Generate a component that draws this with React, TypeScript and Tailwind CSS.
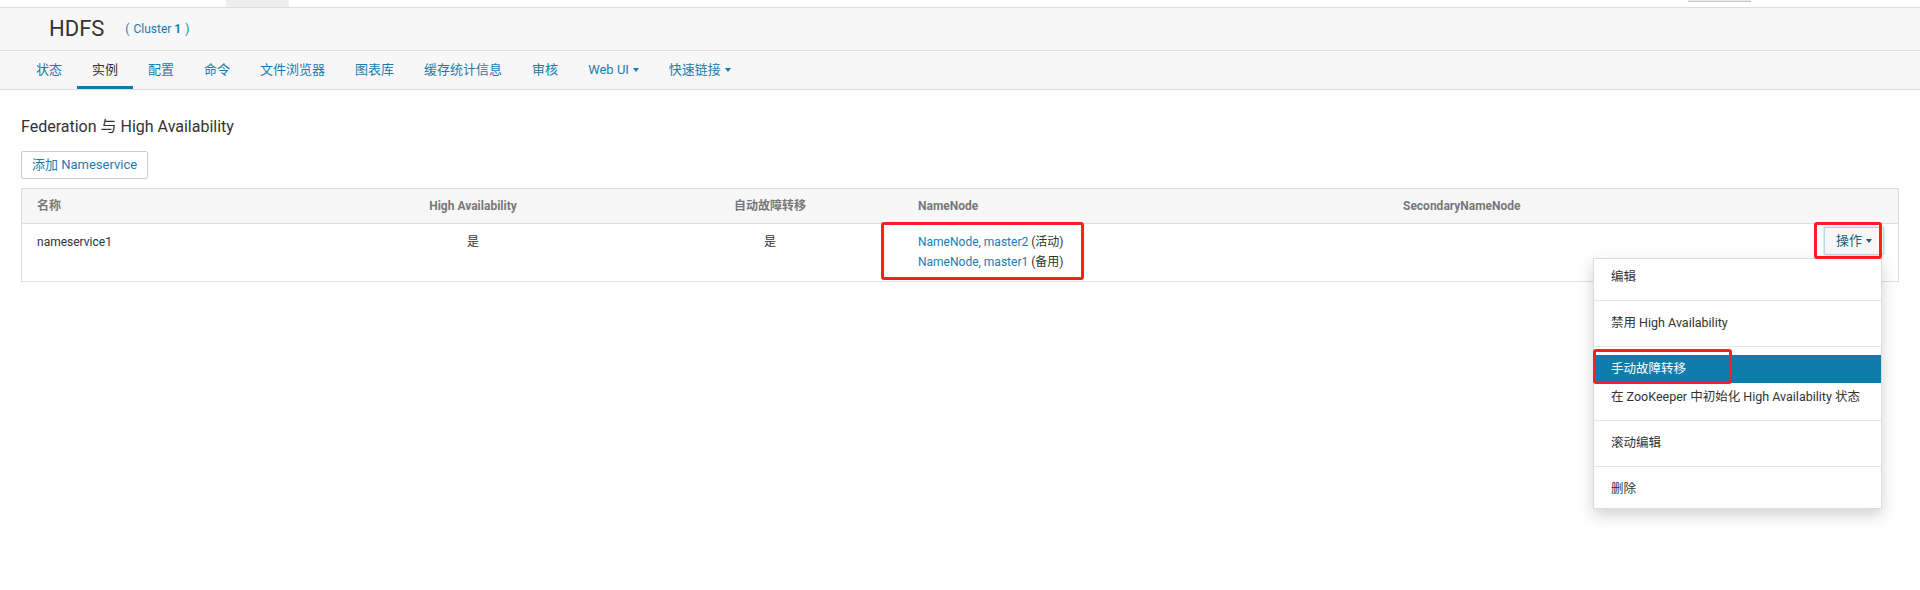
const NAV = [
  { label: "状态" },
  { label: "实例", active: true },
  { label: "配置" },
  { label: "命令" },
  { label: "文件浏览器" },
  { label: "图表库" },
  { label: "缓存统计信息" },
  { label: "审核" },
  { label: "Web UI", caret: true },
  { label: "快速链接", caret: true },
];

const MENU = [
  ["编辑"],
  ["禁用 High Availability"],
  ["手动故障转移", "在 ZooKeeper 中初始化 High Availability 状态"],
  ["滚动编辑"],
  ["删除"],
];

function Caret({ className = "" }: { className?: string }) {
  return (
    <span
      className={`ml-[4px] inline-block h-0 w-0 border-x-[3px] border-t-[4px] border-x-transparent align-middle ${className}`}
    />
  );
}

export default function App() {
  return (
    <div className="relative h-[590px] w-[1920px] overflow-hidden bg-white font-['Roboto','Noto_Sans_CJK_SC',sans-serif] text-[13px] text-[#333]">
      {/* browser remnants on top */}
      <div className="flex h-[8px] border-b border-[#dddddd]">
        <div className="ml-[226px] h-full w-[63px] bg-[#efeeee]" />
        <div className="ml-[1399px] h-[2px] w-[63px] border-b border-[#c8c8c8] bg-[#e9e9e9]" />
      </div>

      {/* service header */}
      <div className="flex h-[43px] items-center border-b border-[#dddddd] bg-[#f7f7f7] pl-[49px]">
        <span className="text-[22px] leading-none text-[#333]">HDFS</span>
        <span className="ml-[21px] text-[12px] text-[#1a7bb0]">
          (<span className="ml-[4px]">Cluster</span>{" "}
          <b className="font-bold">1</b>
          <span className="ml-[4px]">)</span>
        </span>
      </div>

      {/* tabs */}
      <div className="flex h-[39px] border-b border-[#dddddd] bg-[#f7f7f7] pl-[21px]">
        {NAV.map((n) => (
          <div
            key={n.label}
            className={`flex h-full items-center px-[15px] ${
              n.active
                ? "border-b-[3px] border-[#0e7dab] pt-[3px] text-[#333]"
                : "text-[#1a7bb0]"
            }`}
          >
            {n.label}
            {n.caret && <Caret className="border-t-[#1a7bb0]" />}
          </div>
        ))}
      </div>

      <div className="px-[21px]">
        <h2 className="mt-[25px] text-[16px] leading-[24px] font-normal text-[#333]">
          Federation 与 High Availability
        </h2>

        <button className="mt-[12px] h-[28px] rounded-[2px] border border-[#cccccc] bg-white px-[10px] text-[13px] text-[#1a7bb0]">
          添加 Nameservice
        </button>

        <div className="mt-[9px] border border-[#dddddd] text-[12px]">
          <div className="grid h-[35px] grid-cols-[290px_322px_272px_485px_1fr] items-center border-b border-[#dddddd] bg-[#f7f7f7] font-bold text-[#777]">
            <div className="pl-[15px]">名称</div>
            <div className="text-center">High Availability</div>
            <div className="text-center">自动故障转移</div>
            <div className="pl-[12px]">NameNode</div>
            <div className="pl-[12px]">SecondaryNameNode</div>
          </div>
          <div className="grid h-[57px] grid-cols-[290px_322px_272px_485px_1fr] leading-[20px]">
            <div className="pl-[15px] pt-[8px]">nameservice1</div>
            <div className="pt-[8px] text-center">是</div>
            <div className="pt-[8px] text-center">是</div>
            <div className="flex flex-col pl-[12px] pt-[8px]">
              <div>
                <span className="text-[#1a7bb0]">NameNode, master2</span> (活动)
              </div>
              <div>
                <span className="text-[#1a7bb0]">NameNode, master1</span> (备用)
              </div>
            </div>
            <div className="flex justify-end pr-[14px] pt-[3px]">
              <button className="flex h-[28px] items-center rounded-[2px] border border-[#b8d7e8] bg-[#f7f7f7] px-[11px] text-[13px] text-[#1d5f82] shadow-[0_0_0_1px_#dcebf3]">
                操作
                <Caret className="ml-[2px] border-t-[#1d5f82]" />
              </button>
            </div>
          </div>
        </div>
      </div>

      {/* open dropdown */}
      <div className="absolute left-[1593px] top-[258px] w-[289px] border border-[#dddddd] bg-white text-[12.5px] shadow-[0_6px_14px_rgba(0,0,0,0.18)]">
        {MENU.map((group, gi) => {
          const first = gi === 0;
          const last = gi === MENU.length - 1;
          return (
            <div
              key={gi}
              className={`${first ? "pt-[4px]" : "pt-[8px]"} ${
                last ? "pb-[5px]" : "border-b border-[#e5e5e5] pb-[9px]"
              }`}
            >
              {group.map((item) => (
                <div
                  key={item}
                  className={`flex h-[28px] items-center whitespace-nowrap px-[17px] ${
                    item === "手动故障转移" ? "bg-[#0e7dab] text-white" : "text-[#333]"
                  }`}
                >
                  {item}
                </div>
              ))}
            </div>
          );
        })}
      </div>

      {/* red annotation boxes */}
      <div className="absolute left-[881px] top-[222px] h-[58px] w-[203px] rounded-[3px] border-[3px] border-[#ff1d1d]" />
      <div className="absolute left-[1814px] top-[222px] h-[37px] w-[68px] rounded-[3px] border-[3px] border-[#ff1d1d]" />
      <div className="absolute left-[1593px] top-[349px] h-[35px] w-[139px] rounded-[3px] border-[3px] border-[#ff1d1d]" />
    </div>
  );
}
